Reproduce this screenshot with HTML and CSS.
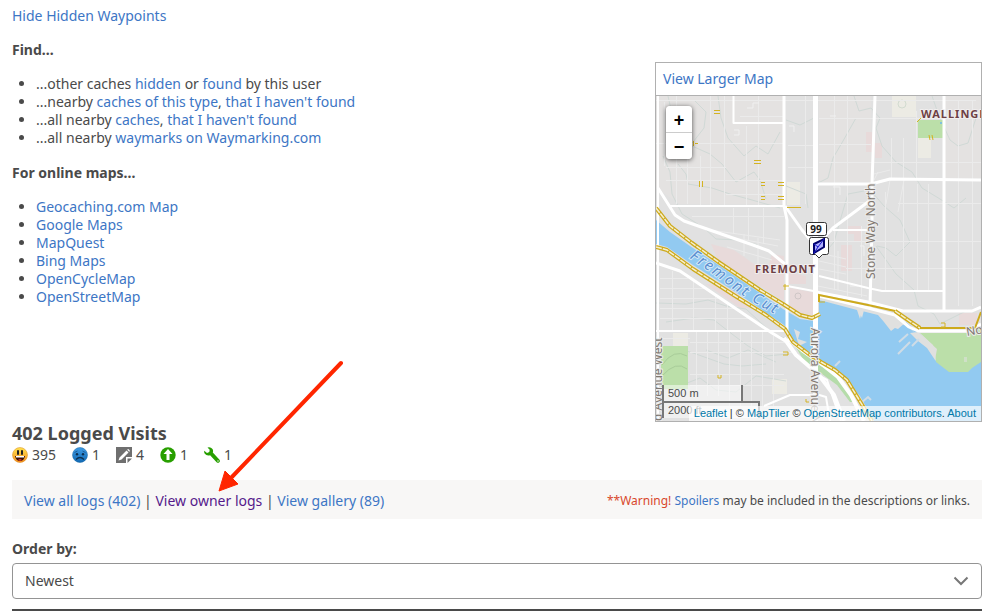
FILE: index.html
```
<!DOCTYPE html>
<html lang="en">
<head>
    <meta charset="UTF-8">
    <meta name="viewport" content="width=device-width, initial-scale=1.0">
    <title>Cache Details</title>
    <link rel="stylesheet" href="styles.css">
</head>
<body>
<main class="page">
    <div class="details">
        <div class="links">
            <a href="#">Hide Hidden Waypoints</a>
            <h3>Find...</h3>
            <ul>
                <li>...other caches <a href="#">hidden</a> or <a href="#">found</a> by this user</li>
                <li>...nearby <a href="#">caches of this type</a>, <a href="#">that I haven't found</a></li>
                <li>...all nearby <a href="#">caches</a>, <a href="#">that I haven't found</a></li>
                <li>...all nearby <a href="#">waymarks on Waymarking.com</a></li>
            </ul>
            <h3>For online maps...</h3>
            <ul>
                <li><a href="#">Geocaching.com Map</a></li>
                <li><a href="#">Google Maps</a></li>
                <li><a href="#">MapQuest</a></li>
                <li><a href="#">Bing Maps</a></li>
                <li><a href="#">OpenCycleMap</a></li>
                <li><a href="#">OpenStreetMap</a></li>
            </ul>
        </div>

        <aside class="map-panel">
            <div class="map-header"><a href="#">View Larger Map</a></div>
            <div class="map">
                <svg class="map-tiles" viewBox="0 0 325 325">
                    <rect width="325" height="325" fill="#e1e1e1"/>
                    <path fill="#e4e2e1" d="M0 0H128V108H24L0 92zM163 0H215V86H163zM288 0H325V82H288z"/>
                    <!-- built up areas -->
                    <g fill="#e8dada">
                        <path d="M55 148L78 154L98 168L112 171L116 158L128 160V205L104 190L62 164zM50 188L76 191L95 212L84 212zM134 192L160 197V220L143 217L134 212zM132 176L150 180V188H132z"/>
                        <path d="M210 36h6v20h-6zM219 47h7v15h-7zM191 130h15v16h-8v-8h-7zM303 217h18v12h-18zM185 149h11v26h-11z"/>
                    </g>
                    <g fill="#ecebe4">
                        <path d="M236 0h24v21h-24zM262 42h13v20h-13zM131 86h13v23h-13zM17 237h15v13h-15zM116 283h15v15h-15z"/>
                    </g>
                    <circle cx="246" cy="8" r="4" fill="none" stroke="#d2dbd0"/>
                    <circle cx="142" cy="200" r="3" fill="none" stroke="#cfc6c6"/>
                    <!-- contours -->
                    <g class="contour">
                        <path d="M12 0L16 18L30 28L34 45M38 4L50 16L48 32L34 50M62 0L65 22L72 42L88 60L100 50L112 58L124 36"/>
                        <path d="M36 50L54 58L66 68L80 86L98 76L104 84L110 103M7 60L14 76L16 98L26 118L48 132L60 143L84 144L102 149"/>
                        <path d="M22 68L30 78L32 88L56 92L74 98L96 104L124 112M130 24L144 29L158 22M130 90L150 98L152 112"/>
                        <path d="M198 0L203 15L215 12L224 22L220 32L226 50L240 66L256 76L266 92L284 103L298 112L310 102M200 22L187 45L177 62L172 82L162 87M276 0L283 20L294 44L302 50L312 47L320 22"/>
                        <path d="M216 96L228 110L244 124L254 146L240 160L230 152L221 150M208 95L192 98L186 118L178 146L168 158M220 150L240 178L258 194L262 210L278 218L284 228L312 214"/>
                        <path d="M0 207L30 208L52 204L70 210L90 213L116 237L128 242M10 226L38 222L58 224L76 238L92 250L110 260L132 258M8 260L22 252L40 258L68 268L86 270L110 268M26 289L44 282L60 294L80 296L100 280L130 285M50 254L72 262L92 254L120 266"/>
                    </g>
                    <!-- minor streets -->
                    <g class="street">
                        <path d="M0 4.500H320M0 47.500H128M10 71.500H70M10 84.500H73M70 84.500H128M70 98.500H128M84 20.500H128M163 22.500H325M163 48.500H215M163 66.500H325M163 106.500H210M163 145.500H325M190 172.500H325M132 49.500H159M132 71.500H159M242 107.500H325"/>
                        <path d="M20.500 0V108M31.500 18V108M44.500 60V110M54.500 0V110M68.500 0V110M90.500 30V110M102.500 0V110M8.500 6V70M149.500 0V108M178.500 0V194M191.500 0V200M205.500 130V201M235.500 42V82M247.500 42V195M260.500 15V82M302.500 4V210M316.500 4V210M261.500 88V195M272.500 88V195M229.500 96V195"/>
                        <path d="M218 78L234 74M218 84L222 76M234 84L230 108M248 84L242 116M36 120.500H128M77.500 112V138M92.500 112V144M107.500 112V148M54 134L124 144"/>
                        <path d="M4 182.500H32M4 192.500H50M4 202.500H62M4 212.500H78M4 222.500H94M16.500 175V234M37.500 183V234M59.500 199V234M71.500 207V234"/>
                        <path d="M34 246.500H131M34 256.500H137M34 278.500H128M34 289.500H128M40.500 236V300M51.500 236V300M62.500 236V300M73.500 236V310M84.500 236V310M95.500 236V310M106.500 236V310M117.500 240V310M4 242.500H34"/>
                        <path d="M79 142L122 150M71 151L116 164M88 138V160M102 142V168M163 157L190 163M163 165L190 171M163 173L190 178M162 190L211 200M182 155V194"/>
                    </g>
                    <path class="block" d="M78 34h5v5h-5M91 12h6v-5h6M174 20h6M177 91h7v8M12 40h6v5M133 30h5v6M204 150h4v10M194 190h8"/>
                    <!-- parks -->
                    <path fill="#bbdfa9" d="M262 24H287V42H262zM5 250H32V293H5z"/>
                    <path fill="#b5dcaa" d="M138 248L158 260L176 275L188 288L199 306L194 306L181 289L166 278L151 270z"/>
                    <path d="M6 269Q18 252 31 260M6 280Q20 264 31 273" fill="none" stroke="#a8cc99" stroke-width="1"/>
                    <!-- lake and canal -->
                    <path fill="#92caf1" d="M0 124L14 136L34 150L64 170L104 197L127 213L144 223L158 225L163 220V204L171 205L202 213L206 222L208 214L226 218L228 224L233 230L242 233L250 226L264 238L279 254L279 264L292 274H312L325 265V325H218L204 300L191 286L179 278L163 268L148 258L137 244L128 229L84 199L37 169L11 151L0 148z"/>
                    <path fill="#bbdfa9" d="M264 237H315L325 231V266L316 272L312 276H293L280 266L279 258L277 249z"/>
                    <path fill="#e0e0df" d="M262 236L281 253L279 264L271 252L262 245L254 237zM138 233L144 236L142 243L151 246L143 250z"/>
                    <path fill="#e0e0df" d="M163 201L212 212L239 220L256 234L262 240L250 229L244 228L235 235L228 226L222 219L206 215L204 223L201 214L171 206L163 204z"/>
                    <path d="M242 258L254 246M243 246L252 238M256 250L263 243M179 270L184 265M205 307L212 301L215 304" fill="none" stroke="#cfdce6" stroke-width="2"/>
                    <circle cx="285" cy="27" r="1" fill="#6bb9ee"/>
                    <rect x="308" y="261" width="3" height="5" fill="#cfe0c7"/>
                    <!-- main roads -->
                    <g class="road">
                        <path d="M2 0V325" stroke-width="2"/>
                        <path d="M2 92L19 119L28 125L97 149L113 155L129 168" stroke-width="3"/>
                        <path d="M14 110H129M77.500 0V27H128M0 235H131" stroke-width="2"/>
                        <path d="M128 0V110L131 124V238" stroke-width="3"/>
                        <path d="M129 110L146 134L156 146" stroke-width="3"/>
                        <path d="M159.500 0V325" stroke-width="5"/>
                        <path d="M160 88H215L234 83L325 84M219 0L216 88V125L214 212" stroke-width="3"/>
                        <path d="M216 103L177 132L160 150M288 0V215" stroke-width="3"/>
                        <path d="M177 134H211M131 190L163 196M163 180L212 192L226 195H288" stroke-width="2"/>
                        <path d="M160 196L212 206L247 215H316L325 211M163 200L212 212L239 219L253 231L262 235H312L325 228" stroke-width="3"/>
                        <path d="M0 167L24 175L64 202L116 237L131 246" stroke-width="3"/>
                        <path d="M128 242L140 259L162 278L178 299L188 325M132 242L146 254L167 269L182 281L195 299L208 325" stroke-width="4"/>
                        <path d="M160 278L171 284L176 299L185 325M160 298L170 301L174 325M108 310L134 299L160 299" stroke-width="2"/>
                    </g>
                    <!-- cycle paths -->
                    <g class="cycle-edge">
                        <path d="M0 112L14 130L36 147L64 167L104 194L127 208L144 219L156 222L164 218"/>
                        <path d="M0 151L11 154L37 173L84 203L110 219L129 233L137 246L154 259L165 266L179 274L191 284L202 302L216 325"/>
                        <path d="M239 215L252 224L264 232"/>
                    </g>
                    <g class="cycle-inner">
                        <path d="M0 112L14 130L36 147L64 167L104 194L127 208L144 219L156 222L164 218"/>
                        <path d="M0 151L11 154L37 173L84 203L110 219L129 233L137 246L154 259L165 266L179 274L191 284L202 302L216 325"/>
                        <path d="M239 215L252 224L264 232"/>
                    </g>
                    <path class="cycle-thin" d="M163 206V199L212 209L239 215M264 232H319L325 216"/>
                    <g class="crossing">
                        <path d="M58 14.500h6M58 17.500h6M98 64.500h7M98 67.500h7M105 86.500h4M105 89.500h4M105 100.500h4M105 103.500h4M122 86.500h6M122 89.500h6M122 100.500h6M122 103.500h6M131 111.500h14M43.500 85v6M46.500 85v6M37.500 45v5M39 47.500h3M261 26l4 -4M273 39l1 5M276 39l1 5M127 190h6M129 188v6M127 256h5v3h-5M62 279v3h3v-3M163 206h6M285 227h4v4h-4M150 303v3h3"/>
                    </g>
                    <path id="canal-label" d="M33 162Q58 178 77 193Q102 210 125 221" fill="none"/>
                    <text class="label-water"><textPath href="#canal-label">Fremont Cut</textPath></text>
                    <text class="label-area" x="265" y="22">WALLINGFORD</text>
                    <text class="label-area" x="99" y="177">FREMONT</text>
                    <text class="label-road" transform="translate(219 183) rotate(-90)">Stone Way North</text>
                    <text class="label-road" transform="translate(6 325) rotate(-90)">d Avenue West</text>
                    <text class="label-road" transform="translate(155 232) rotate(90)">Aurora Avenue North</text>
                    <text class="label-road" transform="translate(311 240) rotate(-10)">North</text>
                    <!-- cache pin -->
                    <g stroke="#333" fill="#fff">
                        <rect x="150.500" y="126.500" width="20" height="13" rx="2"/>
                        <path d="M155.500 141.500h15q2 0 2 2v13q0 2 -2 2h-4l-3.500 3.500l-3.500 -3.500h-4q-2 0 -2 -2v-13q0 -2 2 -2z"/>
                    </g>
                    <text class="pin-text" x="160" y="137">99</text>
                    <path d="M158 148L168 143V151L158 157z" fill="#b0b0ff" stroke="#00006e" stroke-width="2"/>
                    <path d="M158 148L162 151L168 143M158 157L162 151" fill="none" stroke="#1515c8" stroke-width="1"/>
                </svg>
                <div class="zoom">
                    <button type="button" aria-label="Zoom in">+</button>
                    <button type="button" aria-label="Zoom out">−</button>
                </div>
                <div class="scale">
                    <div class="scale-line metric">500 m</div>
                    <div class="scale-line imperial">2000 ft</div>
                </div>
                <div class="attribution"><a href="#">Leaflet</a> | © <a href="#">MapTiler</a> © <a href="#">OpenStreetMap contributors</a>. <a href="#">About</a></div>
            </div>
        </aside>
    </div>

    <h2>402 Logged Visits</h2>
    <ul class="log-totals">
        <li>
            <svg viewBox="0 0 16 16">
                <defs><linearGradient id="smile" x2="0" y2="1"><stop stop-color="#ffe34f"/><stop offset="1" stop-color="#f58d1c"/></linearGradient></defs>
                <circle cx="8" cy="8" r="7.500" fill="url(#smile)" stroke="#d88b1d" stroke-width=".5"/>
                <path d="M6 4v3M10 4v3" stroke="#222" stroke-width="2" stroke-linecap="round"/>
                <path d="M3 9h10q-1 5 -5 5t-5 -5z" fill="#3a1208"/>
                <path d="M4 9h8v1.500h-8z" fill="#fff"/>
                <path d="M6 13q2 -2 4 0q-2 1.500 -4 0z" fill="#e3342b"/>
            </svg>
            395
        </li>
        <li>
            <svg viewBox="0 0 16 16">
                <defs><linearGradient id="frown" x2="0" y2="1"><stop stop-color="#3f9be4"/><stop offset="1" stop-color="#116ab4"/></linearGradient></defs>
                <circle cx="8" cy="8" r="7.500" fill="url(#frown)" stroke="#1464a5" stroke-width=".5"/>
                <path d="M2.500 5.500l3 -1.500M13.500 5.500l-3 -1.500" fill="none" stroke="#1a5f9e" stroke-width="1"/>
                <path d="M4 12.500q4 -4 8 0" fill="none" stroke="#0c2f50" stroke-width="1.200"/>
                <circle cx="5" cy="7.300" r="1.200" fill="#0c2f50"/>
                <circle cx="11" cy="7.300" r="1.200" fill="#0c2f50"/>
            </svg>
            1
        </li>
        <li>
            <svg viewBox="0 0 16 16">
                <path d="M0 0h16v10h-6v6h-10z" fill="#6f6f6f"/>
                <path d="M11.500 11.500h4.500l-4.500 4.500z" fill="#6f6f6f"/>
                <path d="M2.500 13.500l1 -3l7 -7l2 2l-7 7zM11.200 2.800l.8 -.8q1 0 2 2l-.8 .8z" fill="#fff"/>
            </svg>
            4
        </li>
        <li>
            <svg viewBox="0 0 16 16">
                <circle cx="8" cy="8" r="7.700" fill="#289f00"/>
                <path d="M8 2L12.500 7H9.500V13H6.500V7H3.500z" fill="#fff"/>
            </svg>
            1
        </li>
        <li>
            <svg viewBox="0 0 16 16">
                <path d="M3.500 .5q3 -1 5 1.500q1 1.500 .3 3.500l6.500 7q1.200 1.500 0 2.700t-2.700 0l-6.500 -7q-3.500 1 -5.300 -1.500q-1 -1.500 -.5 -3l2.700 2.200l2.300 -.8l.4 -2.300z" fill="#289f00"/>
                <circle cx="14" cy="14" r=".7" fill="#fff"/>
            </svg>
            1
        </li>
    </ul>

    <div class="log-bar">
        <div><a href="#">View all logs (402)</a> | <a class="visited" href="#">View owner logs</a> | <a href="#">View gallery (89)</a></div>
        <div class="note"><span class="warning">**Warning!</span> <a href="#">Spoilers</a> may be included in the descriptions or links.</div>
    </div>

    <label for="order">Order by:</label>
    <div class="select">
        <select id="order">
            <option>Newest</option>
            <option>Oldest</option>
        </select>
        <svg viewBox="0 0 16 10"><path d="M1.500 1.500L8 8L14.500 1.500" fill="none" stroke="#777" stroke-width="2"/></svg>
    </div>
    <hr>

    <!-- arrow pointing at the owner logs link -->
    <svg class="arrow" viewBox="0 0 126 133">
        <path d="M123 4L12 120" stroke="#ff2600" stroke-width="4" stroke-linecap="round"/>
        <path d="M1 132L7 112L20 125z" fill="#ff2600" stroke="#ff2600"/>
    </svg>
</main>
</body>
</html>
```
FILE: styles.css
```
*{
    box-sizing: border-box;
}
body{
    margin: 0;
    background-color: #fff;
    color: #4a4a4a;
    font-family: "Noto Sans", sans-serif;
    font-size: 14px;
    line-height: 18px;
}
a{
    color: #3d76c5;
    text-decoration: none;
}
.page{
    position: relative;
    padding: 7px 22px 0 12px;
}
.details{
    display: flex;
    justify-content: space-between;
    align-items: flex-start;
}
h3{
    margin: 16px 0;
    font-size: 14px;
    line-height: 18px;
}
.links ul{
    margin: 0;
    padding: 0 0 1px 24px;
}

/* map */
.map-panel{
    flex: 0 0 327px;
    margin-top: 55px;
    border: 1px solid #b0b0b0;
}
.map-header{
    padding: 7px;
    border-bottom: 1px solid #b0b0b0;
}
.map{
    position: relative;
    overflow: hidden;
}
.map-tiles{
    display: block;
    width: 100%;
}
.contour{
    fill: none;
    stroke: #d0d9d6;
    stroke-linejoin: round;
}
.street{
    fill: none;
    stroke: #ebebeb;
}
.block{
    fill: none;
    stroke: #f0f0f0;
}
.road{
    fill: none;
    stroke: #fff;
    stroke-linejoin: round;
}
.cycle-edge{
    fill: none;
    stroke: #cdaa1c;
    stroke-width: 4;
    stroke-linejoin: round;
}
.cycle-inner{
    fill: none;
    stroke: #f6efd0;
    stroke-width: 1.5;
    stroke-dasharray: 6 1;
}
.cycle-thin{
    fill: none;
    stroke: #cdaa1c;
    stroke-width: 2;
}
.crossing{
    fill: none;
    stroke: #d4b322;
}
.label-area{
    fill: #6d4044;
    stroke: #f0eeee;
    stroke-width: 2;
    paint-order: stroke;
    font-size: 11px;
    font-weight: bold;
    letter-spacing: 1px;
}
.label-road{
    fill: #80776f;
    stroke: #ececec;
    stroke-width: 2;
    paint-order: stroke;
    font-size: 12px;
}
.label-water{
    fill: #5b8fd0;
    stroke: #d5e8f7;
    stroke-width: 2;
    paint-order: stroke;
    font-size: 15px;
    font-style: italic;
    letter-spacing: 2px;
}
.pin-text{
    fill: #222;
    font-size: 10px;
    font-weight: bold;
    text-anchor: middle;
}
.zoom{
    position: absolute;
    top: 10px;
    left: 10px;
    width: 26px;
    border-radius: 4px;
    overflow: hidden;
    box-shadow: 0 1px 5px rgba(0, 0, 0, 0.65);
}
.zoom button{
    display: block;
    width: 100%;
    height: 26px;
    padding: 2px 0 0;
    border: none;
    background-color: #fff;
    color: #000;
    font: bold 18px/24px "Liberation Sans", Arial, sans-serif;
    cursor: pointer;
}
.zoom button + button{
    height: 27px;
    border-top: 1px solid #ccc;
}
.scale{
    position: absolute;
    left: 6px;
    bottom: 3px;
}
.scale-line{
    padding: 1px 4px;
    border: 2px solid #777;
    background-color: rgba(255, 255, 255, 0.5);
    font: 11px/14px "Liberation Sans", Arial, sans-serif;
}
.metric{
    width: 81px;
    border-top: none;
    border-bottom: none;
}
.imperial{
    width: 98px;
    padding-top: 0;
    border-bottom: none;
}
.attribution{
    position: absolute;
    right: 0;
    bottom: 0;
    padding: 0 5px;
    background-color: rgba(255, 255, 255, 0.7);
    color: #333;
    font: 11px/15px "Liberation Sans", Arial, sans-serif;
    white-space: nowrap;
}
.attribution a{
    color: #0078a8;
}

/* logs */
h2{
    margin: 0 0 2px;
    font-size: 18px;
    line-height: 22px;
}
.log-totals{
    display: flex;
    gap: 16px;
    margin: 0 0 16px;
    padding: 0;
    list-style: none;
}
.log-totals li{
    display: flex;
    align-items: center;
    gap: 4px;
}
.log-totals svg{
    width: 16px;
    height: 16px;
}
.log-bar{
    display: flex;
    justify-content: space-between;
    align-items: center;
    padding: 11px 12px 9px;
    background-color: #f8f7f6;
    line-height: 19px;
}
.visited{
    color: #551a8b;
}
.note{
    font-size: 12px;
}
.warning{
    color: #d8472b;
}
label{
    display: block;
    margin: 21px 0 5px;
    font-weight: bold;
}
.select{
    display: grid;
    align-items: center;
}
.select select,
.select svg{
    grid-area: 1 / 1;
}
.select select{
    width: 100%;
    height: 36px;
    padding: 0 12px;
    border: 1px solid #949494;
    border-radius: 4px;
    background-color: #fff;
    color: #4a4a4a;
    font: inherit;
    appearance: none;
}
.select svg{
    justify-self: end;
    width: 16px;
    margin-right: 13px;
    pointer-events: none;
}
hr{
    margin: 10px 0 0;
    border: none;
    border-top: 2px solid #4a4a4a;
}
.arrow{
    position: absolute;
    top: 359px;
    left: 218px;
    width: 126px;
    pointer-events: none;
}
```
